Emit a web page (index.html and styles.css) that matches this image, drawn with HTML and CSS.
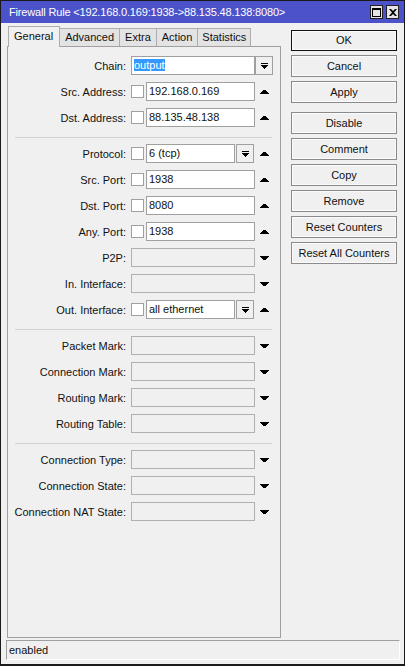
FILE: index.html
```html
<!DOCTYPE html>
<html>
<head>
<meta charset="utf-8">
<title>Firewall Rule</title>
<link rel="stylesheet" href="styles.css">
</head>
<body>
<div class="window">
  <div class="titlebar">
    <span class="title">Firewall Rule &lt;192.168.0.169:1938-&gt;88.135.48.138:8080&gt;</span>
    <div class="tb-btns">
      <span class="tb-btn"><svg width="9" height="9" viewBox="0 0 9 9"><path d="M0 0h9v9H0z M1 2v6h7V2z" fill="#000" fill-rule="evenodd"/></svg></span>
      <span class="tb-btn"><svg width="8" height="7" viewBox="0 0 8 7"><path d="M0 0h2l2 2 2-2h2L5 3.5 8 7H6L4 5 2 7H0l3-3.5z" fill="#000"/></svg></span>
    </div>
  </div>
  <div class="main">
    <div class="left">
      <div class="tabs">
        <div class="tab active">General</div>
        <div class="tab">Advanced</div>
        <div class="tab">Extra</div>
        <div class="tab">Action</div>
        <div class="tab">Statistics</div>
      </div>
      <div class="panel">
        <div class="row">
          <label class="lbl">Chain:</label>
          <div class="field span2">
            <div class="input white"><span class="sel">output</span></div>
            <div class="ddbtn"><svg width="7" height="6" viewBox="0 0 7 6"><path d="M0 0h7v1H0z M0 2h7v1H0z M1 3h5v1H1z M2 4h3v1H2z M3 5h1v1H3z" fill="#000"/></svg></div>
          </div>
        </div>
        <div class="row">
          <label class="lbl">Src. Address:</label>
          <div class="field"><span class="chk"></span><div class="input white">192.168.0.169</div></div>
          <div class="arr"><svg width="9" height="4" viewBox="0 0 9 4"><path d="M3 0h3v1H3z M2 1h5v1H2z M1 2h7v1H1z M0 3h9v1H0z" fill="#000"/></svg></div>
        </div>
        <div class="row">
          <label class="lbl">Dst. Address:</label>
          <div class="field"><span class="chk"></span><div class="input white">88.135.48.138</div></div>
          <div class="arr"><svg width="9" height="4" viewBox="0 0 9 4"><path d="M3 0h3v1H3z M2 1h5v1H2z M1 2h7v1H1z M0 3h9v1H0z" fill="#000"/></svg></div>
        </div>
        <div class="sep"></div>
        <div class="row">
          <label class="lbl">Protocol:</label>
          <div class="field"><span class="chk"></span><div class="input white">6 (tcp)</div>
            <div class="ddbtn small"><svg width="7" height="6" viewBox="0 0 7 6"><path d="M0 0h7v1H0z M0 2h7v1H0z M1 3h5v1H1z M2 4h3v1H2z M3 5h1v1H3z" fill="#000"/></svg></div>
          </div>
          <div class="arr"><svg width="9" height="4" viewBox="0 0 9 4"><path d="M3 0h3v1H3z M2 1h5v1H2z M1 2h7v1H1z M0 3h9v1H0z" fill="#000"/></svg></div>
        </div>
        <div class="row">
          <label class="lbl">Src. Port:</label>
          <div class="field"><span class="chk"></span><div class="input white">1938</div></div>
          <div class="arr"><svg width="9" height="4" viewBox="0 0 9 4"><path d="M3 0h3v1H3z M2 1h5v1H2z M1 2h7v1H1z M0 3h9v1H0z" fill="#000"/></svg></div>
        </div>
        <div class="row">
          <label class="lbl">Dst. Port:</label>
          <div class="field"><span class="chk"></span><div class="input white">8080</div></div>
          <div class="arr"><svg width="9" height="4" viewBox="0 0 9 4"><path d="M3 0h3v1H3z M2 1h5v1H2z M1 2h7v1H1z M0 3h9v1H0z" fill="#000"/></svg></div>
        </div>
        <div class="row">
          <label class="lbl">Any. Port:</label>
          <div class="field"><span class="chk"></span><div class="input white">1938</div></div>
          <div class="arr"><svg width="9" height="4" viewBox="0 0 9 4"><path d="M3 0h3v1H3z M2 1h5v1H2z M1 2h7v1H1z M0 3h9v1H0z" fill="#000"/></svg></div>
        </div>
        <div class="row">
          <label class="lbl">P2P:</label>
          <div class="field"><div class="input empty"></div></div>
          <div class="arr"><svg width="9" height="4" viewBox="0 0 9 4"><path d="M0 0h9v1H0z M1 1h7v1H1z M2 2h5v1H2z M3 3h3v1H3z" fill="#000"/></svg></div>
        </div>
        <div class="row">
          <label class="lbl">In. Interface:</label>
          <div class="field"><div class="input empty"></div></div>
          <div class="arr"><svg width="9" height="4" viewBox="0 0 9 4"><path d="M0 0h9v1H0z M1 1h7v1H1z M2 2h5v1H2z M3 3h3v1H3z" fill="#000"/></svg></div>
        </div>
        <div class="row">
          <label class="lbl">Out. Interface:</label>
          <div class="field"><span class="chk"></span><div class="input white">all ethernet</div>
            <div class="ddbtn small"><svg width="7" height="6" viewBox="0 0 7 6"><path d="M0 0h7v1H0z M0 2h7v1H0z M1 3h5v1H1z M2 4h3v1H2z M3 5h1v1H3z" fill="#000"/></svg></div>
          </div>
          <div class="arr"><svg width="9" height="4" viewBox="0 0 9 4"><path d="M3 0h3v1H3z M2 1h5v1H2z M1 2h7v1H1z M0 3h9v1H0z" fill="#000"/></svg></div>
        </div>
        <div class="sep"></div>
        <div class="row">
          <label class="lbl">Packet Mark:</label>
          <div class="field"><div class="input empty"></div></div>
          <div class="arr"><svg width="9" height="4" viewBox="0 0 9 4"><path d="M0 0h9v1H0z M1 1h7v1H1z M2 2h5v1H2z M3 3h3v1H3z" fill="#000"/></svg></div>
        </div>
        <div class="row">
          <label class="lbl">Connection Mark:</label>
          <div class="field"><div class="input empty"></div></div>
          <div class="arr"><svg width="9" height="4" viewBox="0 0 9 4"><path d="M0 0h9v1H0z M1 1h7v1H1z M2 2h5v1H2z M3 3h3v1H3z" fill="#000"/></svg></div>
        </div>
        <div class="row">
          <label class="lbl">Routing Mark:</label>
          <div class="field"><div class="input empty"></div></div>
          <div class="arr"><svg width="9" height="4" viewBox="0 0 9 4"><path d="M0 0h9v1H0z M1 1h7v1H1z M2 2h5v1H2z M3 3h3v1H3z" fill="#000"/></svg></div>
        </div>
        <div class="row">
          <label class="lbl">Routing Table:</label>
          <div class="field"><div class="input empty"></div></div>
          <div class="arr"><svg width="9" height="4" viewBox="0 0 9 4"><path d="M0 0h9v1H0z M1 1h7v1H1z M2 2h5v1H2z M3 3h3v1H3z" fill="#000"/></svg></div>
        </div>
        <div class="sep"></div>
        <div class="row">
          <label class="lbl">Connection Type:</label>
          <div class="field"><div class="input empty"></div></div>
          <div class="arr"><svg width="9" height="4" viewBox="0 0 9 4"><path d="M0 0h9v1H0z M1 1h7v1H1z M2 2h5v1H2z M3 3h3v1H3z" fill="#000"/></svg></div>
        </div>
        <div class="row">
          <label class="lbl">Connection State:</label>
          <div class="field"><div class="input empty"></div></div>
          <div class="arr"><svg width="9" height="4" viewBox="0 0 9 4"><path d="M0 0h9v1H0z M1 1h7v1H1z M2 2h5v1H2z M3 3h3v1H3z" fill="#000"/></svg></div>
        </div>
        <div class="row">
          <label class="lbl">Connection NAT State:</label>
          <div class="field"><div class="input empty"></div></div>
          <div class="arr"><svg width="9" height="4" viewBox="0 0 9 4"><path d="M0 0h9v1H0z M1 1h7v1H1z M2 2h5v1H2z M3 3h3v1H3z" fill="#000"/></svg></div>
        </div>
      </div>
    </div>
    <div class="buttons">
      <div class="btn default">OK</div>
      <div class="btn">Cancel</div>
      <div class="btn">Apply</div>
      <div class="btn group">Disable</div>
      <div class="btn">Comment</div>
      <div class="btn">Copy</div>
      <div class="btn">Remove</div>
      <div class="btn">Reset Counters</div>
      <div class="btn">Reset All Counters</div>
    </div>
  </div>
  <div class="status">enabled</div>
</div>
</body>
</html>
```

FILE: styles.css
```css
* { box-sizing: border-box; }
html, body { margin: 0; padding: 0; }
body {
  font-family: "Liberation Sans", Arial, sans-serif;
  font-size: 11px;
  color: #111;
  background: #f0f0f0;
}
.window {
  width: 405px;
  height: 666px;
  border: 1px solid #1a1a1a;
  border-bottom-width: 2px;
  display: flex;
  flex-direction: column;
  background: #f0f0f0;
}
.titlebar {
  height: 22px;
  background: #4c52c9;
  color: #fff;
  display: flex;
  align-items: center;
  padding-left: 8px;
  flex: none;
}
.title { flex: 1; white-space: nowrap; letter-spacing: -0.17px; }
.tb-btns { display: flex; gap: 3px; margin-right: 5px; }
.tb-btn {
  width: 13px;
  height: 14px;
  background: #e4e4e4;
  border: 1px solid #222;
  display: flex;
  align-items: center;
  justify-content: center;
}
.tb-btn svg { display: block; }

.main {
  flex: 1;
  display: flex;
  padding: 3px 0 2px 6px;
  min-height: 0;
}
.left {
  width: 274px;
  display: flex;
  flex-direction: column;
}
.tabs {
  display: flex;
  align-items: flex-end;
  height: 20px;
  padding-left: 1px;
  position: relative;
  z-index: 1;
}
.tab {
  height: 18px;
  line-height: 17px;
  padding: 0 5px;
  background: #e3e3e3;
  border: 1px solid #adadad;
  border-bottom: none;
  border-left: none;
  white-space: nowrap;
}
.tab:last-child { padding: 0 4px; }
.tab.active {
  height: 21px;
  line-height: 19px;
  margin-bottom: -1px;
  background: #f0f0f0;
  border-left: 1px solid #adadad;
  padding: 0 6px 0 5px;
}
.panel {
  flex: 1;
  display: flex;
  flex-direction: column;
  border: 1px solid #a0a0a0;
  padding-top: 9px;
}
.row {
  display: grid;
  grid-template-columns: 123px 124px 18px;
  height: 19px;
  margin-bottom: 7px;
  align-items: center;
  flex: none;
}
.lbl { text-align: right; white-space: nowrap; padding-right: 5px; }
.field { display: flex; height: 19px; align-items: center; }
.field.span2 { grid-column: 2 / 4; }
.chk {
  width: 13px;
  height: 13px;
  background: #fff;
  border: 1px solid #a0a0a0;
  margin-right: 2px;
  flex: none;
}
.input {
  flex: 1;
  height: 19px;
  border: 1px solid #a0a0a0;
  line-height: 17px;
  padding-left: 2px;
  white-space: nowrap;
  overflow: hidden;
}
.input.white { background: #fff; }
.input.empty { background: #f0f0f0; border-color: #b0b0b0; }
.sel { background: #3399ff; color: #fff; }
.ddbtn {
  width: 18px;
  height: 19px;
  flex: none;
  border: 1px solid #a0a0a0;
  background: #f0f0f0;
  display: flex;
  align-items: center;
  justify-content: center;
}
.ddbtn.small { margin-left: 1px; margin-right: 1px; }
.ddbtn svg { display: block; }
.arr { display: flex; justify-content: center; align-items: center; }
.arr svg { display: block; }
.sep {
  flex: none;
  height: 1px;
  background: #d2d2d2;
  margin: 3px 8px 6px 7px;
}

.buttons {
  width: 106px;
  margin-left: 10px;
  padding-top: 4px;
  display: flex;
  flex-direction: column;
  gap: 4px;
}
.btn {
  height: 22px;
  line-height: 20px;
  text-align: center;
  border: 1px solid #8a8a8a;
  background: #f0f0f0;
  box-shadow: inset 0 0 0 1px #fbfbfb;
  white-space: nowrap;
}
.btn.default { border-color: #111; height: 21px; line-height: 19px; }
.btn.group { margin-top: 5px; }

.status {
  height: 20px;
  margin: 0 4px 4px 5px;
  border: 1px solid #a0a0a0;
  border-right-color: #fff;
  border-bottom-color: #fff;
  line-height: 18px;
  padding-left: 2px;
  flex: none;
}
```
